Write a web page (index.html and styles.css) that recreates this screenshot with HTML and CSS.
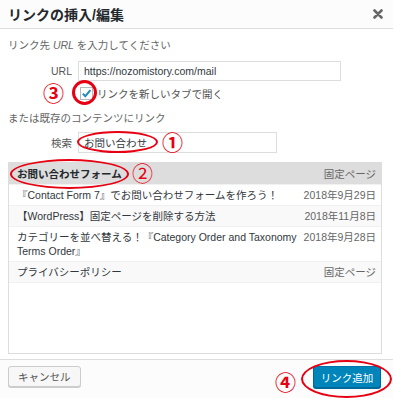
FILE: index.html
```html
<!DOCTYPE html>
<html lang="ja">
<head>
    <meta charset="UTF-8">
    <meta name="viewport" content="width=device-width, initial-scale=1.0">
    <title>リンクの挿入/編集</title>
    <link rel="stylesheet" href="styles.css">
</head>
<body>
    <div class="dialog">
        <div class="dialog-header">
            <h1>リンクの挿入/編集</h1>
            <button class="close-btn" type="button" aria-label="閉じる">
                <svg width="10" height="10" viewBox="0 0 10 10">
                    <path d="M1.5 1.5 L8.5 8.5 M8.5 1.5 L1.5 8.5" stroke="#666" stroke-width="2.6" stroke-linecap="round" fill="none"/>
                </svg>
            </button>
        </div>

        <div class="dialog-body">
            <p class="howto">リンク先 <i>URL</i> を入力してください</p>
            <div class="field-row">
                <label for="url">URL</label>
                <input id="url" class="url-input" type="text" value="https://nozomistory.com/mail">
            </div>
            <div class="check-row">
                <span class="checkbox">
                    <svg width="11" height="11" viewBox="0 0 11 11">
                        <path d="M1.8 5.6 L4.3 8.2 L9.4 2.2" stroke="#1e8cbe" stroke-width="2" fill="none"/>
                    </svg>
                </span>
                <span>リンクを新しいタブで開く</span>
            </div>

            <p class="howto howto-search">または既存のコンテンツにリンク</p>
            <div class="field-row search-row">
                <label for="search">検索</label>
                <input id="search" class="search-input" type="text" value="お問い合わせ">
            </div>

            <ul class="results">
                <li class="alternate selected">
                    <span class="item-title strong">お問い合わせフォーム</span>
                    <span class="item-info">固定ページ</span>
                </li>
                <li>
                    <span class="item-title">『Contact Form 7』でお問い合わせフォームを作ろう！</span>
                    <span class="item-info">2018年9月29日</span>
                </li>
                <li class="alternate">
                    <span class="item-title">【WordPress】固定ページを削除する方法</span>
                    <span class="item-info">2018年11月8日</span>
                </li>
                <li>
                    <span class="item-title">カテゴリーを並べ替える！『Category Order and Taxonomy Terms Order』</span>
                    <span class="item-info">2018年9月28日</span>
                </li>
                <li class="alternate">
                    <span class="item-title">プライバシーポリシー</span>
                    <span class="item-info">固定ページ</span>
                </li>
            </ul>
        </div>

        <div class="dialog-footer">
            <button class="btn" type="button">キャンセル</button>
            <button class="btn btn-primary" type="button">リンク追加</button>
        </div>

        <!-- 赤い注釈 -->
        <span class="ring ring-check"></span>
        <span class="ring ring-search"></span>
        <span class="ring ring-result"></span>
        <span class="ring ring-add"></span>
        <span class="mark mark-1">①</span>
        <span class="mark mark-2">②</span>
        <span class="mark mark-3">③</span>
        <span class="mark mark-4">④</span>
    </div>
</body>
</html>
```

FILE: styles.css
```css
body {
    margin: 0;
    font-family: "Liberation Sans", "Noto Sans CJK JP", sans-serif;
    font-size: 10.5px;
    color: #32373c;
    background-color: #fff;
}

.dialog {
    position: relative;
    width: 393px;
    height: 398px;
    display: flex;
    flex-direction: column;
    background-color: #fff;
    overflow: hidden;
}

.dialog-header {
    height: 28px;
    border-bottom: 1px solid #ddd;
    background-color: #fcfcfc;
    display: flex;
    align-items: center;
    justify-content: space-between;
    padding: 0 10px 0 8px;
}

.dialog-header h1 {
    margin: 0;
    font-size: 14px;
    font-weight: bold;
    color: #23282d;
}

.close-btn {
    border: none;
    background: none;
    padding: 0;
    width: 10px;
    height: 10px;
    display: flex;
    cursor: pointer;
}

.dialog-body {
    flex: 1;
    padding: 8px 11px 0 8px;
}

.howto {
    margin: 0;
    line-height: 16px;
    color: #666;
}

.howto-search {
    margin-top: 9px;
}

.field-row {
    display: flex;
    align-items: center;
    gap: 6px;
    margin-top: 8px;
}

.field-row label {
    width: 64px;
    text-align: right;
    color: #555;
}

.field-row input {
    box-sizing: border-box;
    border: 1px solid #ddd;
    padding: 0 5px;
    font-family: inherit;
    font-size: 10.5px;
    color: #32373c;
    background-color: #fff;
    outline: none;
}

.url-input {
    width: 263px;
    height: 20px;
}

.search-row {
    margin-top: 6px;
}

.search-input {
    width: 199px;
    height: 21px;
    font-size: 11px;
}

.check-row {
    display: flex;
    align-items: center;
    gap: 4px;
    margin-top: 4px;
    padding-left: 72px;
    height: 16px;
    color: #555;
}

.checkbox {
    box-sizing: border-box;
    width: 13px;
    height: 13px;
    border: 1px solid #b4b9be;
    background-color: #fff;
    display: flex;
    align-items: center;
    justify-content: center;
}

.results {
    list-style: none;
    margin: 9px 0 0;
    padding: 0;
    box-sizing: border-box;
    height: 192px;
    border: 1px solid #ddd;
    background-color: #fff;
}

.results li {
    display: flex;
    justify-content: space-between;
    align-items: flex-start;
    padding: 3px 5px 3px 8px;
    line-height: 14px;
    border-bottom: 1px solid #f1f1f1;
    color: #32373c;
}

.results li.alternate {
    background-color: #f9f9f9;
}

.results li.selected {
    background-color: #ddd;
    color: #23282d;
    padding-top: 4px;
}

.item-title {
    width: 78%;
}

.item-title.strong {
    font-weight: bold;
}

.item-info {
    color: #666;
    white-space: nowrap;
}

.dialog-footer {
    height: 32px;
    border-top: 1px solid #ddd;
    background-color: #fcfcfc;
    display: flex;
    justify-content: space-between;
    align-items: flex-start;
    padding: 6px 12px 0 8px;
    box-sizing: content-box;
}

.btn {
    height: 21px;
    padding: 0 9px;
    border: 1px solid #ccc;
    border-radius: 3px;
    background-color: #f7f7f7;
    box-shadow: 0 1px 0 #ccc;
    font-family: inherit;
    font-size: 10.5px;
    color: #555;
    white-space: nowrap;
    cursor: pointer;
}

.btn-primary {
    width: 68px;
    height: 22px;
    padding: 0;
    background-color: #0085ba;
    border-color: #0073aa #006799 #006799;
    box-shadow: 0 1px 0 #006799;
    color: #fff;
}

/* 注釈 */
.ring {
    position: absolute;
    box-sizing: border-box;
    border: 2.5px solid #e60012;
    border-radius: 50%;
}

.ring-check {
    left: 72px;
    top: 80px;
    width: 25px;
    height: 25px;
    border-width: 3px;
}

.ring-search {
    left: 77px;
    top: 131px;
    width: 81px;
    height: 22px;
}

.ring-result {
    left: 10px;
    top: 159px;
    width: 119px;
    height: 30px;
}

.ring-add {
    left: 301px;
    top: 360px;
    width: 91px;
    height: 38px;
}

.mark {
    position: absolute;
    font-family: "Noto Sans CJK JP", sans-serif;
    font-size: 21px;
    font-weight: bold;
    line-height: 21px;
    color: #e60012;
}

.mark-1 {
    left: 162px;
    top: 131px;
}

.mark-2 {
    left: 132px;
    top: 162px;
    font-weight: normal;
}

.mark-3 {
    left: 43px;
    top: 82px;
}

.mark-4 {
    left: 275px;
    top: 371px;
}
```
